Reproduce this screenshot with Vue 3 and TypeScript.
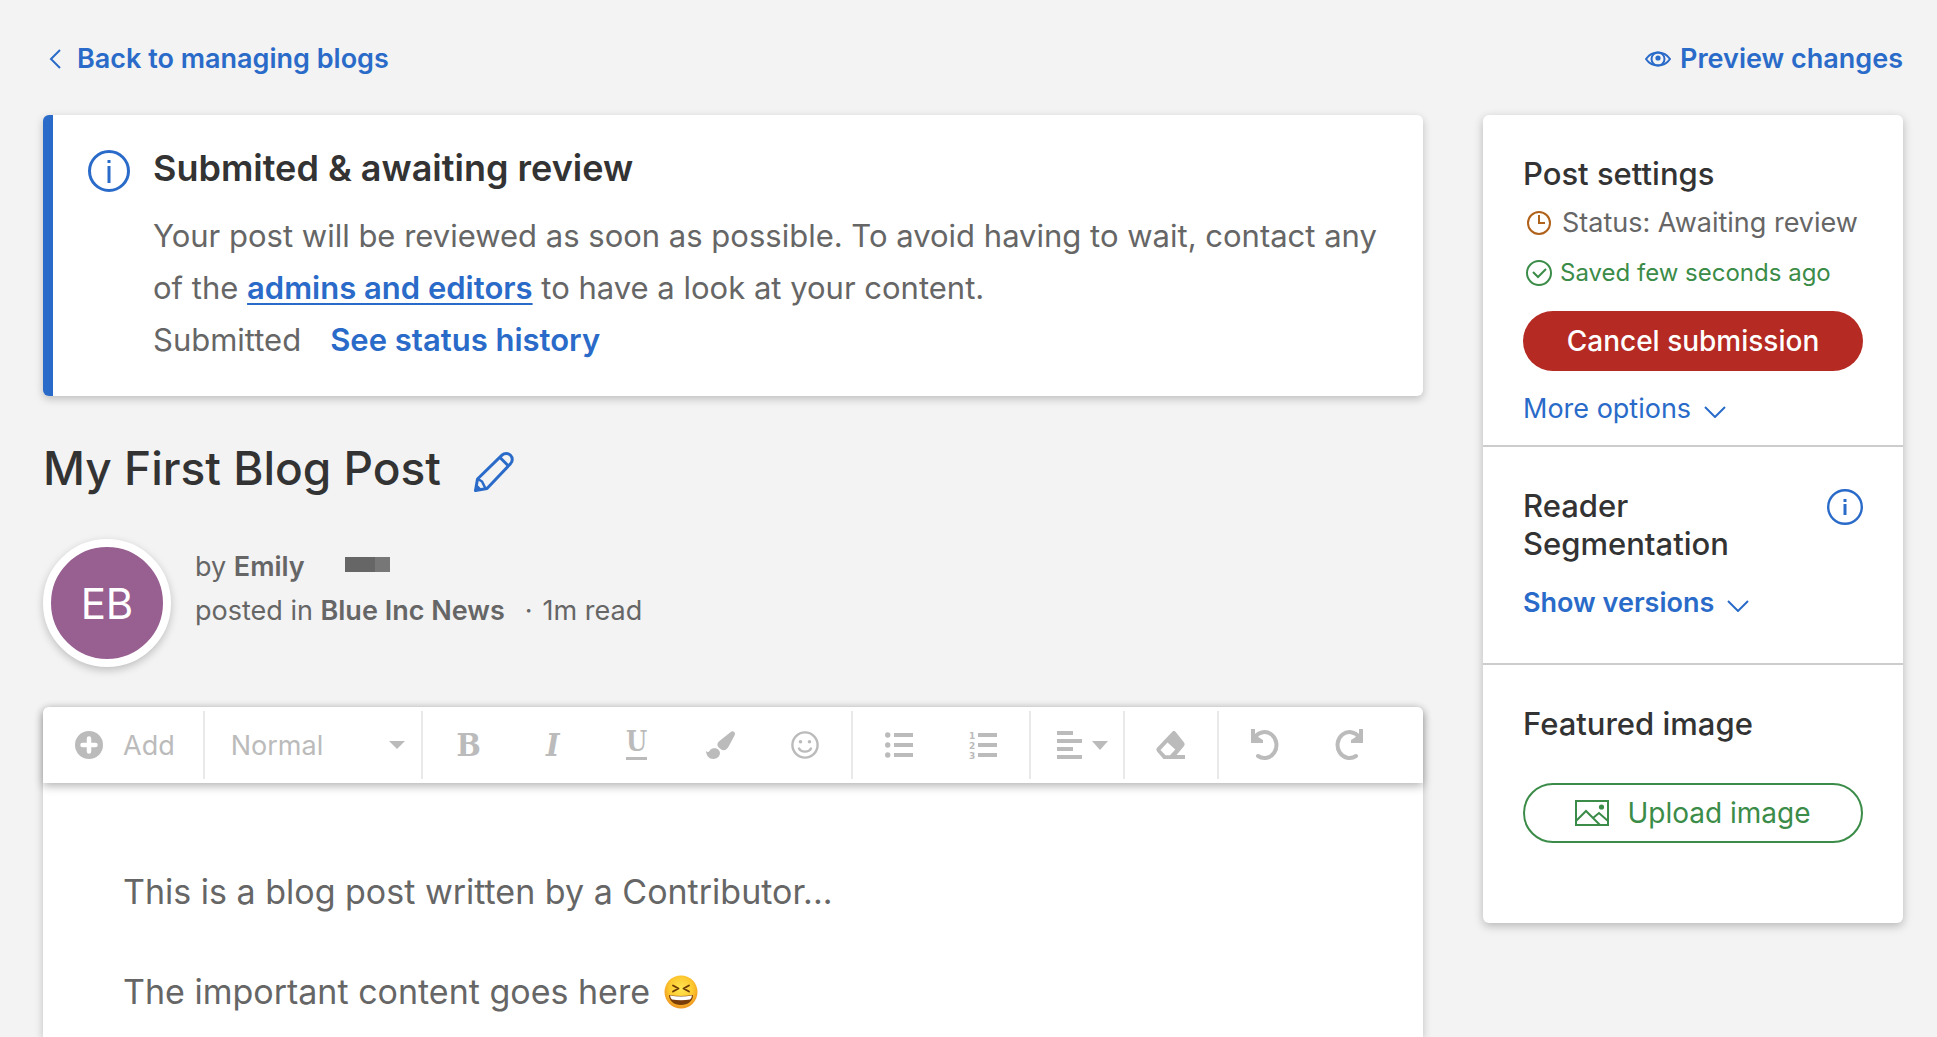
<script setup lang="ts">
import { ref } from 'vue'

const blockStyle = ref('Normal')
const blockStyles = ['Normal', 'Heading', 'Quote']
const paragraph = 'This is a blog post written by a Contributor...'
</script>

<template>
  <div class="page">
    <header class="topbar">
      <a class="back" href="#">
        <svg width="12" height="20" viewBox="0 0 12 20" aria-hidden="true">
          <path d="M11 1 2 10l9 9" fill="none" stroke="currentColor" stroke-width="2" />
        </svg>
        Back to managing blogs
      </a>
      <a class="preview" href="#">
        <svg width="26" height="16" viewBox="0 0 26 16" fill="none" stroke="currentColor" stroke-width="2" aria-hidden="true">
          <path d="M1 8C4 3.500 8.500 1.500 13 1.500S22 3.500 25 8c-3 4.500-7.500 6.500-12 6.500S4 12.500 1 8z" />
          <circle cx="13" cy="8" r="6.500" />
          <circle cx="13" cy="7" r="2.600" fill="currentColor" stroke="none" />
        </svg>
        Preview changes
      </a>
    </header>

    <div class="columns">
      <main class="main">
        <section class="notice">
          <svg class="notice-icon" width="44" height="44" viewBox="0 0 44 44" aria-hidden="true">
            <circle cx="22" cy="22" r="19.500" fill="none" stroke="currentColor" stroke-width="3" />
            <path d="M20.500 11h3v3h-3zM20.500 17h3v17h-3z" fill="currentColor" />
          </svg>
          <div>
            <h2>Submited &amp; awaiting review</h2>
            <p>
              Your post will be reviewed as soon as possible. To avoid having to wait, contact any<br />
              of the <a class="underlined" href="#">admins and editors</a> to have a look at your content.
            </p>
            <p class="history"><span>Submitted</span><a href="#">See status history</a></p>
          </div>
        </section>

        <div class="title-row">
          <h1>My First Blog Post</h1>
          <button type="button" class="edit" aria-label="Edit title">
            <svg width="42" height="42" viewBox="0 0 42 42" fill="none" stroke="currentColor" stroke-width="3" stroke-linejoin="round" aria-hidden="true">
              <path d="M2.500 39.500 4.500 28 29 4.200a6 6 0 0 1 8.500 8.500L14 37.500z" />
              <path d="M5 28l4 2.500 3 6 2 1" stroke-width="2.500" />
              <path d="M27 6.500l8.500 8.500" />
              <path d="M1.500 40.500l1.600-8 6.400 6.400z" fill="currentColor" stroke="none" />
            </svg>
          </button>
        </div>

        <div class="author">
          <div class="avatar">EB</div>
          <div class="meta">
            <div class="byline">by&nbsp;<strong>Emily</strong><span class="redacted"></span></div>
            <div>posted in <strong>Blue Inc News</strong><span class="dot">·</span>1m read</div>
          </div>
        </div>

        <section class="editor">
          <div class="toolbar" role="toolbar" aria-label="Formatting">
            <div class="group">
              <button type="button" class="add">
                <svg width="28" height="28" viewBox="0 0 28 28" aria-hidden="true">
                  <circle cx="14" cy="14" r="14" fill="currentColor" />
                  <path d="M14 7.500v13M7.500 14h13" stroke="#fff" stroke-width="4.500" stroke-linecap="round" />
                </svg>
                Add
              </button>
            </div>
            <div class="group picker">
              <select v-model="blockStyle" aria-label="Text style">
                <option v-for="s in blockStyles" :key="s">{{ s }}</option>
              </select>
              <svg class="caret" width="16" height="8" viewBox="0 0 16 8" aria-hidden="true"><path d="M0 0h16L8 8z" fill="currentColor" /></svg>
            </div>
            <div class="group">
              <button type="button" class="tool letter" aria-label="Bold">B</button>
              <button type="button" class="tool letter slanted" aria-label="Italic">I</button>
              <button type="button" class="tool letter lined" aria-label="Underline"><span>U</span></button>
              <button type="button" class="tool" aria-label="Brush">
                <svg width="29" height="28" viewBox="0 0 29 28" fill="currentColor" aria-hidden="true">
                  <path d="M28.200.9c1.100 1 .9 2.400.2 3.900l-5.600 10.400c-1.200 2.200-2.800 4.100-5.200 4.100-1-.2-2.200-.7-3-1.400-1.900-1.200-3.100-2.400-3.200-4.200 0-1.600 1-2.600 2.100-3.600L24.400 1.200C25.800.1 27.100-.2 28.200.9z" />
                  <path d="M8.500 17.200c2.800-.3 5.500 2.200 5.500 5-.5 3.600-3.200 5.700-6.500 5.700-4.600 0-7.100-3.200-7.500-8 .8.500 1.400 1.200 2.200 1.200.8 0 1.400-1.200 1.900-2 1.100-1.300 2.600-1.900 4.400-1.900z" />
                </svg>
              </button>
              <button type="button" class="tool" aria-label="Emoji">
                <svg width="28" height="28" viewBox="0 0 28 28" fill="none" stroke="currentColor" stroke-width="2.400" aria-hidden="true">
                  <circle cx="14" cy="14" r="12.600" />
                  <path d="M8 17.500c2.200 4.200 9.800 4.200 12 0" stroke-linecap="round" />
                  <circle cx="9.500" cy="10.800" r="1.800" fill="currentColor" stroke="none" />
                  <circle cx="18.500" cy="10.800" r="1.800" fill="currentColor" stroke="none" />
                </svg>
              </button>
            </div>
            <div class="group">
              <button type="button" class="tool" aria-label="Bulleted list">
                <svg width="28" height="26" viewBox="0 0 28 26" fill="currentColor" aria-hidden="true">
                  <circle cx="2.700" cy="3" r="2.700" /><circle cx="2.700" cy="13" r="2.700" /><circle cx="2.700" cy="23" r="2.700" />
                  <path d="M9 1h19v4H9zM9 11h19v4H9zM9 21h19v4H9z" />
                </svg>
              </button>
              <button type="button" class="tool" aria-label="Numbered list">
                <svg class="numbers" width="28" height="30" viewBox="0 0 28 30" fill="currentColor" aria-hidden="true">
                  <text x="0" y="9">1</text><text x="0" y="19">2</text><text x="0" y="29">3</text>
                  <path d="M9 3h19v4H9zM9 13h19v4H9zM9 23h19v4H9z" />
                </svg>
              </button>
            </div>
            <div class="group">
              <button type="button" class="tool align" aria-label="Align">
                <svg width="25" height="28" viewBox="0 0 25 28" fill="currentColor" aria-hidden="true">
                  <path d="M0 0h16v4H0zM0 8h25v4H0zM0 16h16v4H0zM0 24h25v4H0z" />
                </svg>
                <svg width="16" height="9" viewBox="0 0 16 9" aria-hidden="true"><path d="M0 0h16L8 9z" fill="currentColor" /></svg>
              </button>
            </div>
            <div class="group">
              <button type="button" class="tool" aria-label="Clear formatting">
                <svg width="30" height="28" viewBox="0 0 30 28" aria-hidden="true">
                  <path d="M17 0 1.300 16.500q-1.900 2 0 4.200L7.500 28H29v-4h-8.500l7.200-8.500q1.900-2.200 0-4.500L19.300.600Q18.200-.5 17 0z" fill="currentColor" />
                  <path d="M11.500 11.500 4.500 19l5 5.200h4.500l5.300-5.700z" fill="#fff" />
                </svg>
              </button>
            </div>
            <div class="group">
              <button type="button" class="tool" aria-label="Undo">
                <svg width="28" height="32" viewBox="0 0 28 32" fill="none" aria-hidden="true">
                  <path d="M4 8A12 13 0 1 1 7 27" stroke="currentColor" stroke-width="4" stroke-linecap="round" />
                  <path d="M0 0h4v6l8 5v3H0z" fill="currentColor" />
                </svg>
              </button>
              <button type="button" class="tool" aria-label="Redo">
                <svg width="28" height="32" viewBox="0 0 28 32" fill="none" aria-hidden="true">
                  <path d="M24 8A12 13 0 1 0 21 27" stroke="currentColor" stroke-width="4" stroke-linecap="round" />
                  <path d="M28 0h-4v6l-8 5v3h12z" fill="currentColor" />
                </svg>
              </button>
            </div>
          </div>
          <div class="content">
            <p>{{ paragraph }}</p>
            <p>
              The important content goes here
              <svg class="emoji" width="34" height="34" viewBox="0 0 34 34" role="img" aria-label="Laughing face">
                <defs>
                  <radialGradient id="face" cx=".5" cy=".4" r=".6">
                    <stop offset="0" stop-color="#ffe652" /><stop offset=".6" stop-color="#fdc92f" /><stop offset="1" stop-color="#ee9420" />
                  </radialGradient>
                </defs>
                <circle cx="17" cy="17" r="16.500" fill="url(#face)" />
                <path d="M9 10.500l5.500 3L9 16.500M25 10.500l-5.500 3 5.500 3" fill="none" stroke="#6b3a05" stroke-width="1.800" stroke-linecap="round" stroke-linejoin="round" />
                <path d="M5 20q12 2 24 0c0 6-5 10-12 10S5 26 5 20z" fill="#7a3d0a" />
                <path d="M6 20.500q11 2 22 0-.5 3.500-2 4-9 1.500-18 0-1.500-.5-2-4z" fill="#fff" />
              </svg>
            </p>
          </div>
        </section>
      </main>

      <aside class="sidebar">
        <section class="settings">
          <h3>Post settings</h3>
          <div class="status">
            <svg width="32" height="26" viewBox="0 0 32 26" fill="none" stroke="#b0611a" stroke-width="2" aria-hidden="true">
              <circle cx="16" cy="13" r="11" /><path d="M16 5v8h6" />
            </svg>
            Status: Awaiting review
          </div>
          <div class="saved">
            <svg width="32" height="26" viewBox="0 0 32 26" fill="none" stroke="currentColor" stroke-width="2" aria-hidden="true">
              <circle cx="16" cy="13" r="12" /><path d="M10 12l5 5 8-8" />
            </svg>
            Saved few seconds ago
          </div>
          <button type="button" class="pill cancel">Cancel submission</button>
          <button type="button" class="expand">
            More options
            <svg width="22" height="12" viewBox="0 0 22 12" aria-hidden="true"><path d="M1 1l10 10L21 1" fill="none" stroke="currentColor" stroke-width="2" /></svg>
          </button>
        </section>

        <section class="segmentation">
          <div class="segment-head">
            <h3>Reader Segmentation</h3>
            <button type="button" class="info" aria-label="About reader segmentation">
              <svg width="36" height="36" viewBox="0 0 36 36" aria-hidden="true">
                <circle cx="18" cy="18" r="16.800" fill="none" stroke="currentColor" stroke-width="2.400" />
                <path d="M16.500 10h3v3h-3zM16.500 15h3v11h-3z" fill="currentColor" />
              </svg>
            </button>
          </div>
          <button type="button" class="expand strong">
            Show versions
            <svg width="22" height="12" viewBox="0 0 22 12" aria-hidden="true"><path d="M1 1l10 10L21 1" fill="none" stroke="currentColor" stroke-width="2" /></svg>
          </button>
        </section>

        <section class="featured">
          <h3>Featured image</h3>
          <button type="button" class="pill upload">
            <svg width="34" height="26" viewBox="0 0 34 26" fill="none" stroke="currentColor" stroke-width="2" aria-hidden="true">
              <path d="M1 1h32v24H1zM1 21l10-10 14 14M18 18l6-5 9 8" />
              <circle cx="26.500" cy="7" r="2.600" fill="currentColor" stroke="none" />
            </svg>
            Upload image
          </button>
        </section>
      </aside>
    </div>
  </div>
</template>

<style>
body {
  background: #f3f3f3;
}
</style>

<style scoped>
.page {
  box-sizing: border-box;
  display: flex;
  flex-direction: column;
  min-height: 100vh;
  padding: 39px 34px 0 43px;
  overflow: hidden;
  background: #f3f3f3;
  color: #666;
  font-family: Inter, "Liberation Sans", sans-serif;
  font-size: 27px;
}
h1,
h2,
h3,
p {
  margin: 0;
}
a {
  color: #2a6bc9;
  font-weight: 600;
  text-decoration: none;
}
button,
select {
  margin: 0;
  padding: 0;
  border: 0;
  background: none;
  color: inherit;
  font: inherit;
  cursor: pointer;
}
svg {
  flex: none;
}
strong {
  font-weight: 600;
}

.topbar {
  display: flex;
  justify-content: space-between;
  margin-bottom: 36px;
  line-height: 40px;
}
.back,
.preview {
  display: flex;
  align-items: center;
}
.back {
  gap: 16px;
  padding-left: 6px;
}
.preview {
  gap: 9px;
}

.columns {
  display: flex;
  flex: 1;
  gap: 60px;
}
.main {
  display: flex;
  flex: 1;
  flex-direction: column;
  min-width: 0;
}

.notice {
  display: flex;
  gap: 22px;
  padding: 31px 40px 30px 34px;
  border-left: 10px solid #2a6bc9;
  border-radius: 6px;
  background: #fff;
  box-shadow: 0 3px 8px rgba(0, 0, 0, 0.22);
  font-size: 31px;
  line-height: 52px;
}
.notice > div {
  flex: 1;
}
.notice-icon {
  margin-top: 3px;
  color: #2a6bc9;
}
.notice h2 {
  margin-bottom: 20px;
  color: #333;
  font-size: 36px;
  font-weight: 600;
  line-height: 44px;
}
.underlined {
  text-decoration: underline;
  text-decoration-thickness: 2px;
  text-underline-offset: 4px;
}
.history {
  display: flex;
  gap: 29px;
}

.title-row {
  display: flex;
  align-items: center;
  gap: 32px;
  margin-top: 44px;
}
h1 {
  color: #333;
  font-size: 46px;
  font-weight: 500;
  line-height: 56px;
}
.edit {
  display: flex;
  padding-top: 8px;
  color: #2a6bc9;
}

.author {
  display: flex;
  gap: 24px;
  margin: 43px 0 40px;
}
.avatar {
  display: flex;
  align-items: center;
  justify-content: center;
  width: 112px;
  height: 112px;
  border: 8px solid #fff;
  border-radius: 50%;
  background: #985f91;
  box-shadow: 0 3px 8px rgba(0, 0, 0, 0.22);
  color: #fff;
  font-size: 42px;
}
.meta {
  padding-top: 6px;
  line-height: 44px;
}
.byline {
  display: flex;
  align-items: center;
}
.redacted {
  width: 30px;
  height: 15px;
  margin: 0 0 6px 40px;
  border-right: 15px solid #777;
  background: #666;
}
.dot {
  margin: 0 10px 0 20px;
}

.editor {
  display: flex;
  flex: 1;
  flex-direction: column;
  border-radius: 6px 6px 0 0;
  background: #fff;
  box-shadow: 0 2px 8px rgba(0, 0, 0, 0.22);
}
.toolbar {
  display: flex;
  padding: 4px 0;
  border-radius: 6px 6px 0 0;
  background: #fff;
  box-shadow: 0 3px 10px rgba(0, 0, 0, 0.3);
  color: #bbb;
}
.group {
  display: flex;
  height: 68px;
  padding: 0 4px;
  border-right: 2px solid #e9e9e9;
}
.group:last-child {
  border-right: 0;
}
.add {
  display: flex;
  align-items: center;
  gap: 20px;
  padding: 0 24px 0 28px;
}
.picker {
  position: relative;
}
.picker select {
  width: 208px;
  padding-left: 22px;
  appearance: none;
}
.caret {
  position: absolute;
  top: 30px;
  right: 16px;
  pointer-events: none;
}
.tool {
  display: flex;
  align-items: center;
  justify-content: center;
  width: 84px;
}
.numbers {
  overflow: visible;
}
.numbers text {
  font: bold 9px "DejaVu Sans", sans-serif;
}
.letter {
  font-family: "DejaVu Serif Condensed", "DejaVu Serif", serif;
  font-size: 32px;
  font-weight: 700;
}
.slanted {
  font-style: italic;
}
.lined span {
  height: 26px;
  border-bottom: 3px solid;
  font-size: 27px;
  line-height: 22px;
}
.align {
  gap: 10px;
  padding-left: 12px;
}
.content {
  padding: 84px 80px 0;
  font-size: 34px;
  line-height: 50px;
}
.content p + p {
  margin-top: 50px;
}
.emoji {
  margin-left: 4px;
  vertical-align: -5px;
}

.sidebar {
  align-self: flex-start;
  width: 420px;
  border-radius: 6px;
  background: #fff;
  box-shadow: 0 3px 10px rgba(0, 0, 0, 0.25);
}
.sidebar section {
  padding: 40px;
}
.sidebar section + section {
  border-top: 2px solid #ccc;
}
.sidebar .settings {
  padding-bottom: 16px;
}
.sidebar .featured {
  padding-bottom: 80px;
}
h3 {
  color: #333;
  font-size: 31px;
  font-weight: 500;
  line-height: 38px;
}
.status,
.saved {
  display: flex;
  align-items: center;
  gap: 7px;
  line-height: 50px;
  white-space: nowrap;
}
.status {
  margin-top: 5px;
}
.saved {
  gap: 5px;
  margin-bottom: 13px;
  color: #3b8c48;
  font-size: 24px;
}
.pill {
  box-sizing: border-box;
  display: flex;
  align-items: center;
  justify-content: center;
  width: 100%;
  height: 60px;
  border-radius: 30px;
  font-size: 28px;
}
.cancel {
  margin-bottom: 18px;
  background: #b52a22;
  color: #fff;
  font-weight: 500;
}
.expand {
  display: flex;
  align-items: center;
  gap: 13px;
  color: #2a6bc9;
  line-height: 40px;
}
.expand svg {
  margin-top: 6px;
}
.strong {
  margin-top: 20px;
  font-weight: 600;
}
.segment-head {
  display: flex;
  align-items: flex-start;
  justify-content: space-between;
}
.segment-head h3 {
  width: min-content;
}
.info {
  display: flex;
  padding-top: 2px;
  color: #2a6bc9;
}
.upload {
  gap: 18px;
  margin-top: 40px;
  border: 2px solid #3b8c48;
  color: #3b8c48;
}
</style>
